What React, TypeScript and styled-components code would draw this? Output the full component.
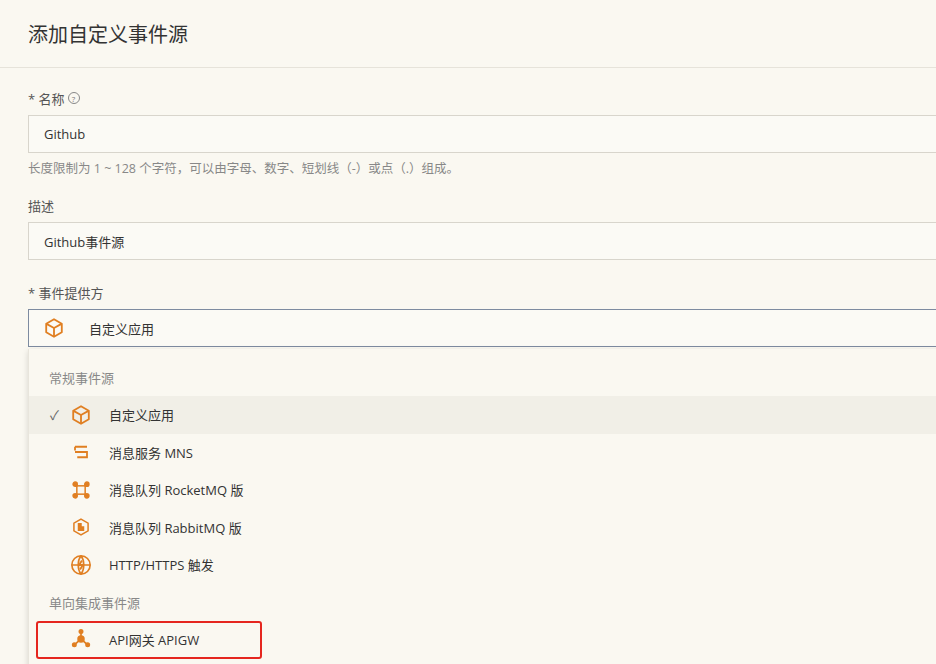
import React from 'react'
import styled, { createGlobalStyle } from 'styled-components'

const Global = createGlobalStyle`
  html, body { margin: 0; background: #faf8f1; overflow: hidden; }
  body { font-family: "Open Sans", "Noto Sans CJK SC", sans-serif; color: #333; }
`

const Header = styled.div`
  height: 67px;
  padding-left: 28px;
  display: flex;
  align-items: center;
  font-size: 20px;
  color: #333;
  border-bottom: 1px solid #e6e3da;
`

const Body = styled.div`
  padding: 20px 0 0 28px;
  width: 940px;
`

const Label = styled.div`
  font-size: 13px;
  color: #555;
  height: 20px;
  display: flex;
  align-items: center;
  gap: 3px;
  margin-bottom: 7px;
`

const Help = styled.span`
  width: 10px; height: 10px; border: 1px solid #888; border-radius: 50%;
  font-size: 8px; display: inline-flex; align-items: center; justify-content: center; color: #777;
`

const Input = styled.div`
  height: 36px;
  border: 1px solid #d8d5cc;
  background: #fbfaf5;
  display: flex;
  align-items: center;
  padding-left: 15px;
  font-size: 13px;
  color: #333;
`

const Hint = styled.div`
  font-size: 12.5px;
  color: #888;
  margin: 5px 0 0;
  height: 20px;
`

const Field = styled.div<{ gap?: number }>`
  margin-top: ${p => p.gap ?? 0}px;
`

const Select = styled(Input)`
  border-color: #7d8ba0;
  padding-left: 14px;
  gap: 24px;
`

const Menu = styled.div`
  margin-top: 2px;
  box-shadow: 0 2px 6px rgba(0,0,0,0.15);
  border-left: 1px solid #e8e5dc;
  padding: 10px 0 4px;
  background: #faf8f1;
  height: 305px;
`

const Group = styled.div`
  height: 37px;
  padding-left: 20px;
  display: flex;
  align-items: center;
  font-size: 13px;
  color: #888;
`

const Item = styled.div<{ active?: boolean; boxed?: boolean }>`
  height: 37.5px;
  display: flex;
  align-items: center;
  font-size: 13px;
  color: #333;
  background: ${p => (p.active ? '#f1efe7' : 'transparent')};
  position: relative;
  ${p => p.boxed && `
    &::after { content: ''; position: absolute; left: 7px; top: 0; width: 222px; height: 34px;
      border: 2px solid #e5261f; border-radius: 3px; }
  `}
`

const Check = styled.span`
  width: 32px; text-align: right; padding-right: 2px; color: #666; font-size: 13px; box-sizing: border-box;
`

const IconBox = styled.span`
  width: 24px; height: 24px; display: flex; align-items: center; justify-content: center; margin: 0 16px 0 8px;
`

const O = '#e07f22'

const Cube = ({ s = 22 }: { s?: number }) => (
  <svg width={s} height={s} viewBox="0 0 24 24" fill="none" stroke={O} strokeWidth="2" strokeLinejoin="round">
    <path d="M12 2.5l8.5 4.8v9.4L12 21.5l-8.5-4.8V7.3z" />
    <path d="M3.8 7.5L12 12l8.2-4.5M12 12v9.3" />
  </svg>
)
const Mns = () => (
  <svg width="18" height="18" viewBox="0 0 24 24" fill="none" stroke={O} strokeWidth="2.4">
    <path d="M4 5h16M4 12h16v7H7M4 5v5" />
  </svg>
)
const Rocket = () => (
  <svg width="20" height="20" viewBox="0 0 24 24" fill="none" stroke={O} strokeWidth="1.8">
    <rect x="7" y="7" width="10" height="10" />
    <circle cx="5" cy="5" r="2.5" fill={O} /><circle cx="19" cy="5" r="2.5" fill={O} />
    <circle cx="5" cy="19" r="2.5" fill={O} /><circle cx="19" cy="19" r="2.5" fill={O} />
  </svg>
)
const Rabbit = () => (
  <svg width="20" height="20" viewBox="0 0 24 24" fill="none" stroke={O} strokeWidth="1.8">
    <path d="M12 2.5l8.5 4.8v9.4L12 21.5l-8.5-4.8V7.3z" />
    <path d="M9 8v8h6v-4h-3V8z" fill={O} />
  </svg>
)
const Globe = () => (
  <svg width="22" height="22" viewBox="0 0 24 24" fill="none" stroke={O} strokeWidth="1.8">
    <circle cx="12" cy="12" r="10" />
    <path d="M2 12h20M12 2c-4 5-4 15 0 20M12 2c4 5 4 15 0 20" />
    <path d="M13 7l-3 5h4l-3 5" strokeWidth="2" />
  </svg>
)
const Apigw = () => (
  <svg width="20" height="20" viewBox="0 0 24 24" fill="none" stroke={O} strokeWidth="2">
    <path d="M12 3v9M12 12l-8 7M12 12l8 7" />
    <circle cx="12" cy="12" r="3.5" fill={O} />
    <circle cx="12" cy="3" r="2" fill={O} /><circle cx="4" cy="19" r="2" fill={O} /><circle cx="20" cy="19" r="2" fill={O} />
  </svg>
)

const items: { name: string; icon: React.ReactNode; active?: boolean }[] = [
  { name: '自定义应用', icon: <Cube />, active: true },
  { name: '消息服务 MNS', icon: <Mns /> },
  { name: '消息队列 RocketMQ 版', icon: <Rocket /> },
  { name: '消息队列 RabbitMQ 版', icon: <Rabbit /> },
  { name: 'HTTP/HTTPS 触发', icon: <Globe /> },
]

export default function App() {
  return (
    <>
      <Global />
      <Header>添加自定义事件源</Header>
      <Body>
        <Field>
          <Label>* 名称 <Help>?</Help></Label>
          <Input>Github</Input>
          <Hint>长度限制为 1 ~ 128 个字符，可以由字母、数字、短划线（-）或点（.）组成。</Hint>
        </Field>
        <Field gap={17}>
          <Label>描述</Label>
          <Input>Github事件源</Input>
        </Field>
        <Field gap={22}>
          <Label>* 事件提供方</Label>
          <Select><Cube s={22} />自定义应用</Select>
          <Menu>
            <Group>常规事件源</Group>
            {items.map(it => (
              <Item key={it.name} active={it.active}>
                <Check>{it.active ? '✓' : ''}</Check>
                <IconBox>{it.icon}</IconBox>
                {it.name}
              </Item>
            ))}
            <Group>单向集成事件源</Group>
            <Item boxed>
              <Check />
              <IconBox><Apigw /></IconBox>
              API网关 APIGW
            </Item>
          </Menu>
        </Field>
      </Body>
    </>
  )
}
